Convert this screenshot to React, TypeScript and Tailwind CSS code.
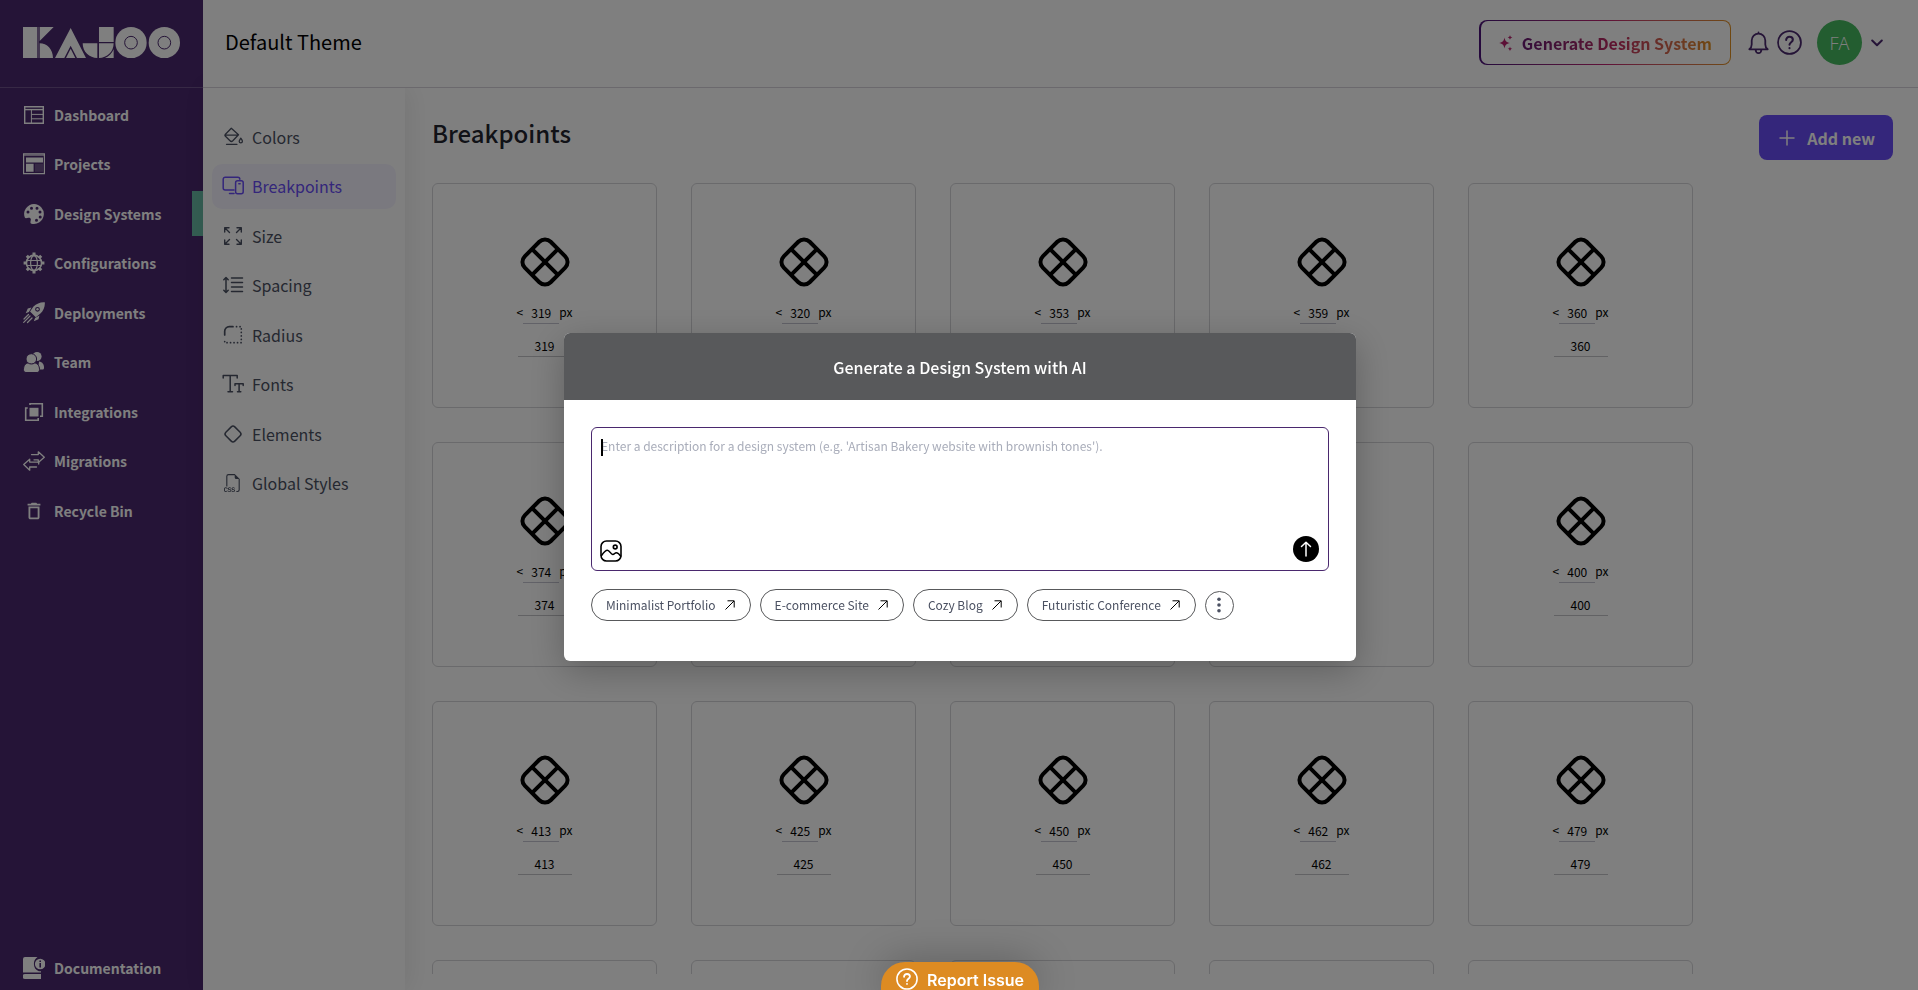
import { useState } from "react";
import type { ReactNode } from "react";
import { BsFiletypeCss } from "react-icons/bs";
import { MdDeleteOutline } from "react-icons/md";

type NavItem = { label: string; icon: ReactNode };

const svgProps = { width: 22, height: 22, viewBox: "0 0 22 22", fill: "none", "aria-hidden": true };
const line = { stroke: "currentColor", strokeLinecap: "round", strokeLinejoin: "round" } as const;

const DashboardIcon = () => (
    <svg {...svgProps} stroke="currentColor">
        <path d="M1.7 2.7h18.6v16.6H1.7z" strokeWidth="1.4" />
        <path d="M1.5 5.6h19" strokeWidth="1.4" />
        <path d="M8.4 6v13M8.4 10.4h12M8.4 14.8h12" />
    </svg>
);

const ProjectsIcon = () => (
    <svg {...svgProps}>
        <path d="M.6.9h20.8v19.8H.6z" stroke="currentColor" strokeWidth="1.2" />
        <path d="M1 2.1h20" stroke="currentColor" strokeWidth="1" />
        <path d="M3 4.6h17v4.8H3zM3 10.8h7.6v8H3z" fill="currentColor" />
        <path d="M12 10.8h8v8h-8z" fill="currentColor" opacity=".2" />
    </svg>
);

const PaletteIcon = () => (
    <svg {...svgProps}>
        <path fill="currentColor" fillRule="evenodd" d="M11 1a10 10 0 1 1-2.6 19.7c-1.5-.6-.9-2.3-.6-3.6.3-1.7-.9-2.6-2.5-2.3-1.5.3-2.8 1-3.5-.2A10 10 0 0 1 11 1Zm-2.5 2.7a1.5 1.5 0 1 0 0 3 1.5 1.5 0 0 0 0-3Zm5.5 0a1.5 1.5 0 1 0 0 3 1.5 1.5 0 0 0 0-3ZM5 7.4a1.5 1.5 0 1 0 0 3 1.5 1.5 0 0 0 0-3Zm12 0a1.5 1.5 0 1 0 0 3 1.5 1.5 0 0 0 0-3Zm.2 5a1.5 1.5 0 1 0 0 3 1.5 1.5 0 0 0 0-3Zm-3.7 3.4a1.5 1.5 0 1 0 0 3 1.5 1.5 0 0 0 0-3Z" />
    </svg>
);

const GlobeGearIcon = () => (
    <svg {...svgProps} stroke="currentColor" strokeWidth="1.2">
        <circle cx="11" cy="11" r="7.6" strokeWidth="1.6" />
        <ellipse cx="11" cy="11" rx="3.4" ry="7.4" />
        <path d="M4 8.5h14M4 13.5h14" />
        <path d="M11 .6v2.6M11 18.8v2.6M.6 11h2.6M18.8 11h2.6M3.8 3.8l1.7 1.7M16.5 16.5l1.7 1.7M3.8 18.2l1.7-1.7M16.5 5.5l1.7-1.7" strokeWidth="3" />
    </svg>
);

const RocketIcon = () => (
    <svg {...svgProps}>
        <path fill="currentColor" fillRule="evenodd" d="M21.8.2c.4 4.3-1.3 8.3-4.4 11.3l-4.6 3.7-5.8-5.8 3.5-4.8C13.5 1.6 17.5-.2 21.8.2Zm-7.3 4.7a2.4 2.4 0 1 0 0 4.8 2.4 2.4 0 0 0 0-4.8Z" />
        <circle cx="14.5" cy="7.3" r="1.2" fill="currentColor" />
        <path fill="currentColor" d="m8.5 5.6-3.7.9-2.1 4.7 3.2-1.3ZM16.4 13.5l-.9 3.7-4.7 2.1 1.3-3.2Z" />
        <path {...line} strokeWidth="1.2" d="M5.5 12.5 1 17M7 14l-6.3 6.3M9 16l-4.5 4.5" />
    </svg>
);

const TeamIcon = () => (
    <svg {...svgProps} fill="currentColor">
        <circle cx="14" cy="5.5" r="4.6" />
        <path d="M16 10.5c3.5.4 5.2 3.2 5 6.5-.1 1-.7 1.5-1.5 1.5H15Z" />
        <g stroke="#4a286e" strokeWidth="1">
            <circle cx="8.3" cy="8" r="5.3" />
            <path d="M.5 18.5c0-4.2 2.5-6.4 4.7-6.4 1.8 1.2 4.6 1.2 6.4 0 2.4 0 4.9 2.2 4.9 6.4 0 2-1 3-2.4 3H3c-1.5 0-2.5-1-2.5-3Z" />
        </g>
    </svg>
);

const IntegrationsIcon = () => (
    <svg {...svgProps}>
        <path d="M6.5 6.8h9v8.7h-9z" fill="currentColor" />
        <path d="M7 4V2.7h12.3v12.5H17M4.7 7H2.7v12.3h12.5V17" stroke="currentColor" strokeWidth="1.6" />
    </svg>
);

const MigrationsIcon = () => (
    <svg {...svgProps} {...line} strokeWidth="1.3">
        <path d="M8.5 4.6h6.8V1.8l6 5.4-6 5.4V9.8H11" />
        <path d="M13.5 17H6.7v3.2L.7 14.6l6-5.4v2.9h9V14" />
    </svg>
);

const DocsIcon = () => (
    <svg {...svgProps} fill="currentColor">
        <path d="M2 0h12.5C12 1.7 10.9 4 10.9 6.9c0 3.3 1.7 6 5 7.3H18v1.3H0V2a2 2 0 0 1 2-2ZM2 17h16v5H2a2.5 2.5 0 0 1 0-5Z" />
        <path fillRule="evenodd" d="M17.2 1.7a5.2 5.2 0 1 1 0 10.6 5.2 5.2 0 0 1 0-10.6Zm-.8 1.8v1.5H18V3.5Zm0 2.6v4.4H18V6.1Z" />
    </svg>
);

const BucketIcon = () => (
    <svg {...svgProps} {...line} strokeWidth="1.3">
        <path d="M8 3.5 9.3 2.2l7.2 6.5-5.7 6.1c-.8.8-2 .8-2.8 0L3.2 10c-.5-.6-.5-1 0-1.5L9.3 2.2M3 9.2l13-.3" />
        <path d="M18.8 12.2c1.2 1.7 1.6 2.3 1.6 3a1.6 1.6 0 0 1-3.2 0c0-.7.5-1.3 1.6-3ZM4.5 18.3h10.5" />
    </svg>
);

const DevicesIcon = () => (
    <svg {...svgProps} {...line} strokeWidth="1.5">
        <path d="M12 15H3.2a2 2 0 0 1-2-2V4.2a2 2 0 0 1 2-2h12.6a2 2 0 0 1 2 2M7.5 18.6h4.5" />
        <rect x="13.6" y="5.7" width="7.6" height="13" rx="2" />
        <path d="M16.8 8.7h1.3" />
    </svg>
);

const SizeIcon = () => (
    <svg {...svgProps} {...line} strokeWidth="1.4">
        <path d="M2.7 7V2.7H7M3 3l4.5 4.5M15 2.7h4.3V7M19 3l-4.5 4.5M2.7 15v4.3H7M3 19l4.5-4.5M15 19.3h4.3V15M19 19l-4.5-4.5" />
    </svg>
);

const SpacingIcon = () => (
    <svg {...svgProps} {...line} strokeWidth="1.5">
        <path d="M4 4v14M1.8 5.7 4 3.5l2.2 2.2M1.8 16.3 4 18.5l2.2-2.2M9.5 4h11M9.5 8.5h11M9.5 13h11M9.5 17.5h11" />
    </svg>
);

const RadiusIcon = () => (
    <svg {...svgProps} {...line}>
        <path d="M2.7 11V7.2a4.5 4.5 0 0 1 4.5-4.5H11" strokeWidth="1.7" />
        <path d="M14.5 2.7h4.8v16H2.7v-4.5" strokeWidth="1.7" strokeDasharray=".1 3.4" />
    </svg>
);

const FontsIcon = () => (
    <svg {...svgProps} {...line} strokeWidth="1.5">
        <path d="M1.2 5V2.5h14V5M8.2 2.5v16.2M6 18.7h4.5" />
        <path d="M13 12.5v-1.7h8.2v1.7M17.1 10.8v7.9M15.5 18.7h3.3" />
    </svg>
);

const DiamondIcon = () => (
    <svg {...svgProps}>
        <rect x="4.7" y="4.7" width="12.6" height="12.6" rx="2.5" transform="rotate(45 11 11)" {...line} strokeWidth="1.5" />
    </svg>
);

const mainNav: NavItem[] = [
    { label: "Dashboard", icon: <DashboardIcon /> },
    { label: "Projects", icon: <ProjectsIcon /> },
    { label: "Design Systems", icon: <PaletteIcon /> },
    { label: "Configurations", icon: <GlobeGearIcon /> },
    { label: "Deployments", icon: <RocketIcon /> },
    { label: "Team", icon: <TeamIcon /> },
    { label: "Integrations", icon: <IntegrationsIcon /> },
    { label: "Migrations", icon: <MigrationsIcon /> },
    { label: "Recycle Bin", icon: <MdDeleteOutline size={22} /> },
];

const themeNav: NavItem[] = [
    { label: "Colors", icon: <BucketIcon /> },
    { label: "Breakpoints", icon: <DevicesIcon /> },
    { label: "Size", icon: <SizeIcon /> },
    { label: "Spacing", icon: <SpacingIcon /> },
    { label: "Radius", icon: <RadiusIcon /> },
    { label: "Fonts", icon: <FontsIcon /> },
    { label: "Elements", icon: <DiamondIcon /> },
    { label: "Global Styles", icon: <BsFiletypeCss size={18} /> },
];

const breakpoints = [319, 320, 353, 359, 360, 374, 375, 384, 390, 400, 413, 425, 450, 462, 479];

const pending = [0, 1, 2, 3, 4];

const suggestions = ["Minimalist Portfolio", "E-commerce Site", "Cozy Blog", "Futuristic Conference"];

function Logo() {
    return (
        <svg className="h-[31px] w-[157px]" viewBox="69 81 471 93" role="img" aria-label="Kajoo">
            <g fill="#fff">
                <rect x="69" y="81" width="42" height="93" />
                <rect x="113" y="81" width="2" height="93" />
                <path d="M119 81h42l-42 42ZM119 130c22 0 40 18 40 44h-40Z" />
                <path d="m212 84 46 90h-27l-19-37-19 37h-28Z" />
                <path d="m212 146 14 28h-28Z" />
                <rect x="297" y="81" width="44" height="45" />
                <path d="M248 130h44v44c-24 0-44-18-44-44ZM297 130h44c0 26-20 44-44 44ZM341 148v26h-26c12-5 21-14 26-26Z" />
                <circle cx="393" cy="128" r="47" />
                <circle cx="493" cy="128" r="47" />
            </g>
            <g fill="none" stroke="#4a286e" strokeWidth="3">
                <circle cx="393" cy="128" r="19" />
                <circle cx="493" cy="128" r="19" />
            </g>
        </svg>
    );
}

function Sidebar() {
    return (
        <aside className="flex w-[203px] shrink-0 flex-col bg-[#4a286e] text-white">
            <div className="flex h-[88px] shrink-0 items-center border-b border-white/20 px-[23px] pb-[2px]">
                <Logo />
            </div>
            <nav className="flex flex-1 flex-col justify-between pt-1" aria-label="Main">
                <div className="flex h-[441px] flex-col justify-between">
                    {mainNav.map((item) => (
                        <a key={item.label} href="#" className="flex h-[45px] items-center justify-between pl-[23px] text-[14px] leading-5 font-bold">
                            <span className="flex items-center gap-[9px]">
                                {item.icon}
                                {item.label}
                            </span>
                            {item.label === "Design Systems" && <span className="h-full w-[11px] bg-[#68baa4]" />}
                        </a>
                    ))}
                </div>
                <a href="#" className="flex h-11 items-center gap-[9px] pl-[23px] text-[14px] leading-5 font-bold">
                    <DocsIcon />
                    Documentation
                </a>
            </nav>
        </aside>
    );
}

function Header() {
    return (
        <header className="relative z-[1] flex h-[88px] shrink-0 items-center justify-between border-b border-[#d6d2da] bg-white pr-[35px] pb-[2px] pl-[22px]">
            <div className="pb-[2px] text-[20px] leading-7">Default Theme</div>
            <div className="flex items-center text-[#4a286e]">
                <button className="mr-[17px] h-[45px] rounded-lg bg-linear-to-r from-[#4a1078] via-[#c02070] to-[#e09020] p-px pl-[2px]">
                    <span className="flex h-full items-center gap-2 rounded-[7px] bg-white pr-[18px] pl-[17px]">
                        <svg width="16" height="18" viewBox="0 0 16 18" fill="#b8206c" aria-hidden="true">
                            <path d="M6.5 3.5c.7 3.6 1.9 4.8 5.5 5.5-3.6.7-4.8 1.9-5.5 5.5C5.8 10.9 4.6 9.7 1 9c3.6-.7 4.8-1.9 5.5-5.5Z" />
                            <path d="M12 1c.3 1.5.9 2.1 2.4 2.4-1.5.3-2.1.9-2.4 2.4-.3-1.5-.9-2.1-2.4-2.4C11.1 3.1 11.7 2.5 12 1ZM12 12.4c.3 1.5.9 2.1 2.4 2.4-1.5.3-2.1.9-2.4 2.4-.3-1.5-.9-2.1-2.4-2.4 1.5-.3 2.1-.9 2.4-2.4Z" />
                        </svg>
                        <span className="bg-linear-to-r from-[#6a1a74] via-[#c02860] to-[#e09020] bg-clip-text text-[16px] leading-6 font-semibold text-transparent">Generate Design System</span>
                    </span>
                </button>
                <button aria-label="Notifications" className="mr-2">
                    <svg width="21" height="24" viewBox="0 0 21 24" fill="none" {...line} strokeWidth="1.8" aria-hidden="true">
                        <path d="M1.3 18.3h18.4c-1.7-1.2-2.4-2.6-2.4-4.7V9.5a6.8 6.8 0 0 0-13.6 0v4.1c0 2.1-.7 3.5-2.4 4.7ZM10.5 2.7V1.5M7.6 18.6a2.9 3.6 0 0 0 5.8 0" />
                    </svg>
                </button>
                <button aria-label="Help" className="mr-[15px]">
                    <HelpIcon size={25} />
                </button>
                <button aria-label="Account menu" className="flex items-center gap-[9px]">
                    <span className="flex size-[45px] items-center justify-center rounded-full bg-[#46ba60] font-[Open_Sans] text-[18px] leading-6 font-light text-white">FA</span>
                    <svg width="12" height="8" viewBox="0 0 12 8" fill="none" {...line} strokeWidth="2" aria-hidden="true">
                        <path d="m1.2 1.5 4.8 4.8 4.8-4.8" />
                    </svg>
                </button>
            </div>
        </header>
    );
}

function HelpIcon({ size }: { size: number }) {
    return (
        <svg width={size} height={size} viewBox="0 0 24 24" fill="none" {...line} strokeWidth="1.7" aria-hidden="true">
            <circle cx="12" cy="12" r="11" />
            <path d="M8.8 9.6c0-1.9 1.4-3.1 3.2-3.1s3.2 1.2 3.2 2.9c0 2.3-3.2 2.5-3.2 4.8M12 17.3v.1" strokeWidth="2" />
        </svg>
    );
}

function ThemeNav() {
    return (
        <nav aria-label="Theme" className="w-[202px] shrink-0 px-[9px] pt-[26px] shadow-[4px_0_24px_rgba(0,0,0,0.08)]">
            <div className="flex h-[392px] flex-col justify-between">
                {themeNav.map((item) => (
                    <a
                        key={item.label}
                        href="#"
                        className={
                            "flex h-[45px] items-center gap-2 rounded-[10px] pl-[9px] text-[16px] leading-6 " +
                            (item.label === "Breakpoints" ? "bg-[#f5f3fe] text-[#684cf6]" : "text-[#4b5162]")
                        }
                    >
                        <span className="flex w-[23px] justify-center">{item.icon}</span>
                        {item.label}
                    </a>
                ))}
            </div>
        </nav>
    );
}

function BreakpointCard({ value }: { value: number }) {
    return (
        <div className="flex h-[225px] flex-col items-center rounded-md border border-[#d4d4d8] pt-[53px] text-[12px] leading-5">
            <svg width="50" height="50" viewBox="0 0 50 50" fill="none" stroke="#000" strokeWidth="4" aria-hidden="true">
                <rect x="6.7" y="6.7" width="36.6" height="36.6" rx="8" transform="rotate(45 25 25)" />
                <path d="m12.1 12.1 25.8 25.8M37.9 12.1 12.1 37.9" />
            </svg>
            <div className="mt-[15px] flex">
                <span>&lt;</span>
                <input aria-label="Width in pixels" defaultValue={value} className="h-[22px] w-9 border-b border-[#c4c4d0] text-center outline-none" />
                <span>px</span>
            </div>
            <input aria-label="Breakpoint name" defaultValue={value} className="mt-[10px] h-[23px] w-[54px] border-b border-[#c4c4c8] text-center outline-none" />
        </div>
    );
}

function GenerateModal() {
    const [text, setText] = useState("");

    return (
        <div className="fixed inset-0 z-10 flex items-center justify-center bg-black/50 pt-1 pl-[2px]">
            <div role="dialog" aria-labelledby="modal-title" className="w-[792px] max-w-full overflow-hidden rounded-md bg-white shadow-[0_10px_36px_rgba(0,0,0,0.25)]">
                <h2 id="modal-title" className="flex h-[67px] items-center justify-center bg-[#58595b] text-[16px] leading-6 font-medium text-white">
                    Generate a Design System with AI
                </h2>
                <div className="px-[27px] pt-[27px] pb-10">
                    <div className="relative flex h-[144px] flex-col rounded-md border border-[#4a286e] pt-2 pr-[9px] pb-2 pl-2">
                        <span className="absolute top-[11px] left-[9px] h-[17px] w-[2px] bg-black" />
                        <textarea
                            aria-label="Design system description"
                            placeholder="Enter a description for a design system (e.g. 'Artisan Bakery website with brownish tones')."
                            value={text}
                            onChange={(e) => setText(e.target.value)}
                            className="flex-1 resize-none pl-px text-[12px] leading-5 caret-transparent outline-none placeholder:text-[#a9adba]"
                        />
                        <div className="flex items-end justify-between">
                            <button aria-label="Add image">
                                <svg width="22" height="22" viewBox="0 0 22 22" fill="none" {...line} strokeWidth="1.6" aria-hidden="true">
                                    <rect x="1" y="1" width="20" height="20" rx="5.5" />
                                    <circle cx="15.2" cy="7" r="1.9" />
                                    <path d="M1.5 15.5c2-3 4-5.3 6-5.3s3.3 4.3 5.2 4.3 2-1.8 3.6-1.8 3 1.4 4.5 3.5" />
                                </svg>
                            </button>
                            <button aria-label="Send" className="flex size-[26px] items-center justify-center rounded-full bg-black text-white">
                                <svg width="12" height="16" viewBox="0 0 12 16" fill="none" {...line} strokeWidth="1.5" aria-hidden="true">
                                    <path d="M6 15V1.2M1.5 5.5 6 1.2l4.5 4.3" />
                                </svg>
                            </button>
                        </div>
                    </div>
                    <div className="mt-[18px] flex items-center gap-[9px]">
                        {suggestions.map((s) => (
                            <button key={s} className="flex h-8 items-center gap-[9px] rounded-full border border-[#58595b] pr-[15px] pl-[14px] text-[12px] leading-5 text-[#4b5162]">
                                {s}
                                <svg width="10" height="10" viewBox="0 0 10 10" fill="none" stroke="#000" strokeWidth="1" aria-hidden="true">
                                    <path d="M.5 9.5 9 1M2.5.8h6.7v6.7" />
                                </svg>
                            </button>
                        ))}
                        <button aria-label="More suggestions" className="flex size-[29px] items-center justify-center rounded-full border border-[#58595b] text-[#4b5162]">
                            <svg width="4" height="16" viewBox="0 0 4 16" fill="currentColor" aria-hidden="true">
                                <circle cx="2" cy="2.2" r="1.8" />
                                <circle cx="2" cy="8" r="1.8" />
                                <circle cx="2" cy="13.8" r="1.8" />
                            </svg>
                        </button>
                    </div>
                </div>
            </div>
        </div>
    );
}

export default function App() {
    return (
        <div className="flex h-screen overflow-hidden bg-white font-['Noto_Sans_CJK_JP',sans-serif] text-black">
            <Sidebar />
            <div className="flex min-w-0 flex-1 flex-col">
                <Header />
                <div className="flex min-h-0 flex-1">
                    <ThemeNav />
                    <main className="flex min-w-0 flex-1 flex-col pr-[25px] pb-4 pl-[27px]">
                        <div className="flex shrink-0 items-start justify-between pt-[27px]">
                            <h1 className="text-[24px] leading-9 font-medium text-[#22242e]">Breakpoints</h1>
                            <button className="flex h-[45px] items-center gap-3 rounded-lg bg-[#684cf6] pr-[18px] pl-5 text-[16px] leading-6 font-bold text-white">
                                <svg width="16" height="16" viewBox="0 0 16 16" fill="none" {...line} strokeWidth="1.5" aria-hidden="true">
                                    <path d="M8 1v14M1 8h14" />
                                </svg>
                                Add new
                            </button>
                        </div>
                        <div className="mt-[23px] grid min-h-0 flex-1 grid-cols-[repeat(auto-fill,225px)] content-start gap-[34px] overflow-hidden">
                            {breakpoints.map((bp) => (
                                <BreakpointCard key={bp} value={bp} />
                            ))}
                            {pending.map((n) => (
                                <div key={n} className="h-[225px] rounded-md border border-[#d4d4d8]" />
                            ))}
                        </div>
                    </main>
                </div>
            </div>
            <GenerateModal />
            <div className="fixed inset-x-0 bottom-0 z-20 flex justify-center pl-[2px]">
                <button className="flex h-7 items-start gap-[9px] rounded-t-3xl bg-[#dd8b22] pt-[6px] pr-[15px] pl-[15px] font-[Inter] text-[16px] leading-6 font-semibold text-white shadow-[0_0_40px_rgba(0,0,0,0.3)]">
                    <HelpIcon size={22} />
                    <span>Report Issue</span>
                </button>
            </div>
        </div>
    );
}
